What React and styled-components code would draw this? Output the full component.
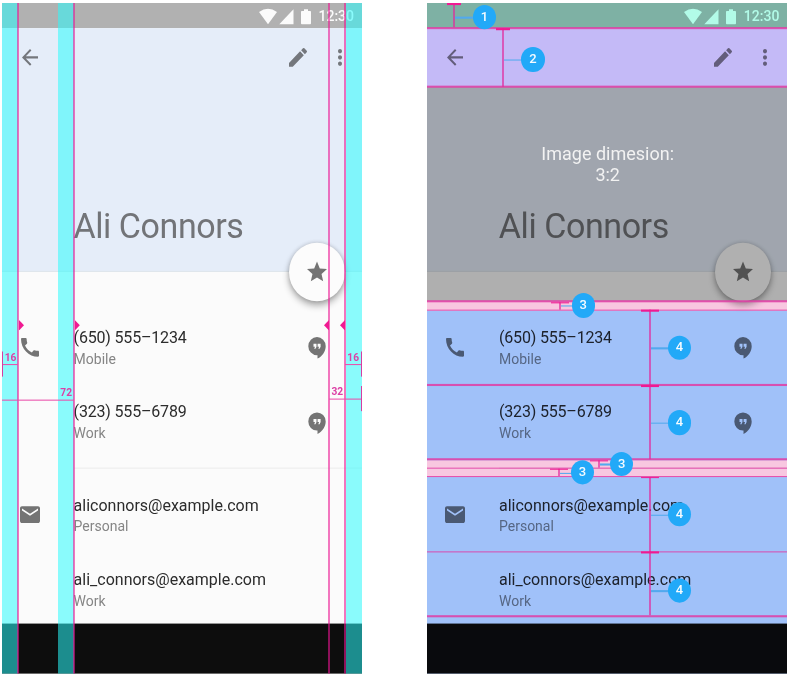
import React from 'react';
import styled, { createGlobalStyle, css } from 'styled-components';
import { MdArrowBack, MdEdit, MdMoreVert, MdStar, MdCall, MdEmail } from 'react-icons/md';

const PINK = '#f01a92';
const BLUE = '#22a9f8';
const GREY = '#747474';

const GlobalStyle = createGlobalStyle`
  *, *::before, *::after { box-sizing: border-box; }
  body {
    margin: 0;
    background: #fff;
    font-family: Roboto, "Liberation Sans", sans-serif;
    overflow: hidden;
  }
`;

const Page = styled.main`
  display: flex;
  gap: 65.8px;
  height: 674px;
  padding: 3.2px 0 0 2px;
  overflow: hidden;
`;

/* Screens are laid out on a 640-unit tall grid and stretched to the sheet. */
const Phone = styled.section`
  position: relative;
  isolation: isolate;
  flex: none;
  display: flex;
  flex-direction: column;
  width: 359.6px;
  height: 641px;
  overflow: hidden;
  background: #fbfbfb;
  transform: scaleY(1.0465);
  transform-origin: top;
`;

const StatusBar = styled.header`
  display: flex;
  flex: none;
  align-items: center;
  justify-content: flex-end;
  height: 24px;
  padding-right: 7.6px;
  background: #b1b1b1;
  color: #fbfbfb;
`;

const StatusIcons = styled.svg`
  width: 54px;
  height: 16px;
  margin: 1px 5.8px 0 0;
  fill: currentColor;
`;

const Clock = styled.time`
  font-size: 14px;
  line-height: 16px;
  font-weight: 500;
`;

const Hero = styled.div`
  display: flex;
  flex: none;
  flex-direction: column;
  justify-content: space-between;
  height: 232.5px;
  background: #e5edf9;
  border-bottom: 1px solid #dfe5ec;
`;

const AppBar = styled.nav`
  display: flex;
  align-items: center;
  height: 56px;
  padding: 0 10px 0 16px;
  color: #74777c;
  svg { width: 24px; height: 24px; }
  svg:nth-child(2) { margin: 0 18px 0 auto; }
`;

const Name = styled.h1`
  margin: 0 0 23px 71.4px;
  font-size: 34px;
  line-height: 40px;
  font-weight: 400;
  letter-spacing: -0.42px;
  color: #727478;
`;

const Contacts = styled.div`
  flex: 1;
  min-height: 0;
  overflow: hidden;
  padding-top: 36.7px;
`;

const Group = styled.div`
  & + & {
    margin-top: 7.3px;
  }
  & + &::before {
    content: '';
    display: block;
    height: 1px;
    margin: 0 0 8px 72px;
    background: #ececec;
  }
`;

const Row = styled.div`
  display: grid;
  grid-template-columns: 56px 1fr 24px;
  align-items: center;
  height: 71.8px;
  padding: 0 32.3px 0 16px;
  color: ${GREY};
  > svg { width: 24px; height: 24px; }
`;

const Details = styled.div`
  grid-column: 2;
  padding-top: 1.2px;
  margin-left: -0.4px;
`;

const Primary = styled.div`
  font-size: 16px;
  line-height: 20px;
  letter-spacing: ${(p) => (p.$tight ? '-0.18px' : '0')};
  color: #2c2c2c;
  white-space: nowrap;
`;

const Secondary = styled.div`
  font-size: 14px;
  line-height: 20px;
  color: #858585;
`;

const NavBar = styled.footer`
  flex: none;
  height: 47.8px;
  background: #0d0d0d;
`;

const Fab = styled.div`
  position: absolute;
  right: 16.3px;
  top: 228.6px;
  display: grid;
  place-items: center;
  width: 56px;
  height: 56px;
  border-radius: 50%;
  background: #fcfcfc;
  box-shadow: 0 4px 7px rgba(0, 0, 0, 0.32), 0 0 4px rgba(0, 0, 0, 0.16);
  color: ${GREY};
  svg { width: 24px; height: 24px; }
`;

const Overlay = styled.div`
  position: absolute;
  inset: 0;
`;

const Margin = styled.div`
  position: absolute;
  top: 0;
  bottom: 0;
  left: ${(p) => p.$x}px;
  width: 16px;
  background: rgba(42, 252, 254, 0.54);
`;

const Keyline = styled.div`
  position: absolute;
  top: 0;
  bottom: 0;
  left: ${(p) => p.$x}px;
  width: 2px;
  background: rgba(236, 20, 146, 0.58);
`;

const Arrow = styled.div`
  position: absolute;
  top: 303px;
  left: ${(p) => p.$x}px;
  width: 5px;
  height: 10px;
  background: ${PINK};
  clip-path: ${(p) => (p.$left ? 'polygon(100% 0, 0 50%, 100% 100%)' : 'polygon(0 0, 100% 50%, 0 100%)')};
`;

const Span = styled.div`
  position: absolute;
  left: ${(p) => p.$x}px;
  top: ${(p) => p.$y}px;
  width: ${(p) => p.$w}px;
  height: 14px;
  padding-right: ${(p) => p.$inset || 2}px;
  text-align: right;
  font-size: 10.2px;
  font-weight: 700;
  line-height: 14px;
  color: #dc3fa5;
  border-bottom: 1.3px solid #ea4fab;
  ${(p) => p.$tick && css`
    &::after {
      content: '';
      position: absolute;
      ${p.$tick}: 0;
      top: 1px;
      width: 1px;
      height: 24px;
      background: #d63da2;
    }
  `}
`;

const Band = styled.div`
  position: absolute;
  left: 0;
  right: 0;
  top: ${(p) => p.$top}px;
  height: ${(p) => p.$h}px;
  background: ${(p) => p.$color};
  mix-blend-mode: multiply;
`;

const Rule = styled.div`
  position: absolute;
  left: 0;
  right: 0;
  top: ${(p) => p.$y}px;
  height: 1.6px;
  background: rgba(224, 60, 165, 0.85);
`;

const Caption = styled.p`
  position: absolute;
  top: 133.8px;
  left: 1px;
  right: 0;
  margin: 0;
  text-align: center;
  font-size: 18px;
  line-height: 19.7px;
  color: #f2f2f2;
`;

const Stem = styled.div`
  position: absolute;
  left: ${(p) => p.$x}px;
  top: ${(p) => p.$top}px;
  width: 2px;
  height: ${(p) => p.$h}px;
  background: rgba(226, 40, 155, 0.66);
  &::before {
    content: '';
    position: absolute;
    top: 0;
    left: ${(p) => 1 - p.$cap / 2}px;
    width: ${(p) => p.$cap}px;
    height: 1.5px;
    background: ${PINK};
  }
`;

const Leader = styled.div`
  position: absolute;
  left: 2px;
  top: ${(p) => p.$at}px;
  width: ${(p) => p.$w}px;
  height: 1.4px;
  background: #52a9ee;
`;

const Badge = styled.div`
  position: absolute;
  left: ${(p) => p.$x}px;
  top: ${(p) => p.$at}px;
  width: 23.4px;
  height: 23.4px;
  margin: -11.7px 0 0 -11.7px;
  border-radius: 50%;
  background: ${BLUE};
  color: #f4fbff;
  text-align: center;
  font-size: 13px;
  font-weight: 500;
  line-height: 22.6px;
`;

const Hangouts = () => (
  <svg viewBox="0 0 24 24" fill="currentColor">
    <path
      fillRule="evenodd"
      d="M12 2.2a8.7 8.7 0 1 0 0 17.4h.5v3.2c4.9-2.4 8.2-7.1 8.2-11.9A8.7 8.7 0 0 0 12 2.2zM8.5 8.5h3v3l-1 2H9.2l.8-2H8.5zM12.6 8.5h3v3l-1 2h-1.3l.8-2h-1.5z"
    />
  </svg>
);

const Screen = ({ children }) => (
  <Phone>
    <StatusBar>
      <StatusIcons viewBox="0 0 54 16">
        <path d="M0 3.7Q9-2.7 18 3.7L9 15.2z" />
        <path d="M34.5 1v14.2H20.3z" />
        <path d="M45 1h4v1.6h2.2a.8.8 0 0 1 .8.8v11a.8.8 0 0 1-.8.8h-8.4a.8.8 0 0 1-.8-.8v-11a.8.8 0 0 1 .8-.8H45z" />
      </StatusIcons>
      <Clock>12:30</Clock>
    </StatusBar>
    <Hero>
      <AppBar>
        <MdArrowBack />
        <MdEdit />
        <MdMoreVert />
      </AppBar>
      <Name>Ali Connors</Name>
    </Hero>
    <Contacts>
      <Group>
        <Row>
          <MdCall />
          <Details>
            <Primary $tight>(650) 555–1234</Primary>
            <Secondary>Mobile</Secondary>
          </Details>
          <Hangouts />
        </Row>
        <Row>
          <Details>
            <Primary $tight>(323) 555–6789</Primary>
            <Secondary>Work</Secondary>
          </Details>
          <Hangouts />
        </Row>
      </Group>
      <Group>
        <Row>
          <MdEmail />
          <Details>
            <Primary>aliconnors@example.com</Primary>
            <Secondary>Personal</Secondary>
          </Details>
        </Row>
        <Row>
          <Details>
            <Primary>ali_connors@example.com</Primary>
            <Secondary>Work</Secondary>
          </Details>
        </Row>
      </Group>
    </Contacts>
    <NavBar />
    <Fab><MdStar /></Fab>
    {children}
  </Phone>
);

const bands = [
  [0, 24, '#b5ffec'],
  [24, 56, '#dac8fd'],
  [80, 205, '#b2b2b2'],
  [285, 8.5, '#fccae4'],
  [293.5, 143, '#a3c4fd'],
  [436.5, 16, '#fccae4'],
  [452.5, 188.5, '#a3c4fd'],
];

const rules = [23.2, 79, 284.4, 292.8, 364.4, 435.4, 443.6, 451.8, 523.8, 585];

const measures = [
  { n: 1, x: 25.6, top: 0.4, h: 23, cap: 14, at: 13, dx: 31.5 },
  { n: 2, x: 74.5, top: 24, h: 55.5, cap: 14, at: 30, dx: 31 },
  { n: 3, x: 132, top: 285.5, h: 7.5, cap: 18, at: 3.4, dx: 23.8 },
  { n: 3, x: 171, top: 436.6, h: 7, cap: 18, at: 3.6, dx: 23.3 },
  { n: 3, x: 131, top: 444.8, h: 7, cap: 18, at: 3.8, dx: 24 },
  { n: 4, x: 222, top: 293.2, h: 72, cap: 18, at: 36, dx: 30 },
  { n: 4, x: 222, top: 365, h: 71, cap: 18, at: 36, dx: 30 },
  { n: 4, x: 222, top: 452.6, h: 72, cap: 18, at: 36.2, dx: 30 },
  { n: 4, x: 222, top: 524.4, h: 61, cap: 18, at: 36.8, dx: 30 },
];

export default function App() {
  return (
    <>
      <GlobalStyle />
      <Page>
        <Screen>
          <Overlay>
            {[0, 56, 343.6].map((x) => <Margin key={x} $x={x} />)}
            {[15, 71, 326, 342].map((x) => <Keyline key={x} $x={x} />)}
            <Arrow $x={17} />
            <Arrow $x={72.8} />
            <Arrow $x={322} $left />
            <Arrow $x={338} $left />
            <Span $x={0} $y={332} $w={16} $inset={1.6} $tick="left">16</Span>
            <Span $x={0} $y={366} $w={72}>72</Span>
            <Span $x={343} $y={332} $w={16.6} $inset={2.6} $tick="right">16</Span>
            <Span $x={327} $y={365} $w={32.6} $inset={18.4} $tick="right">32</Span>
          </Overlay>
        </Screen>
        <Screen>
          {bands.map(([top, h, color]) => <Band key={top} $top={top} $h={h} $color={color} />)}
          {rules.map((y) => <Rule key={y} $y={y} />)}
          <Caption>Image dimesion:<br />3:2</Caption>
          {measures.map((m) => (
            <Stem key={m.top} $x={m.x} $top={m.top} $h={m.h} $cap={m.cap}>
              <Leader $at={m.at} $w={m.dx - 10} />
              <Badge $x={m.dx} $at={m.at}>{m.n}</Badge>
            </Stem>
          ))}
        </Screen>
      </Page>
    </>
  );
}
